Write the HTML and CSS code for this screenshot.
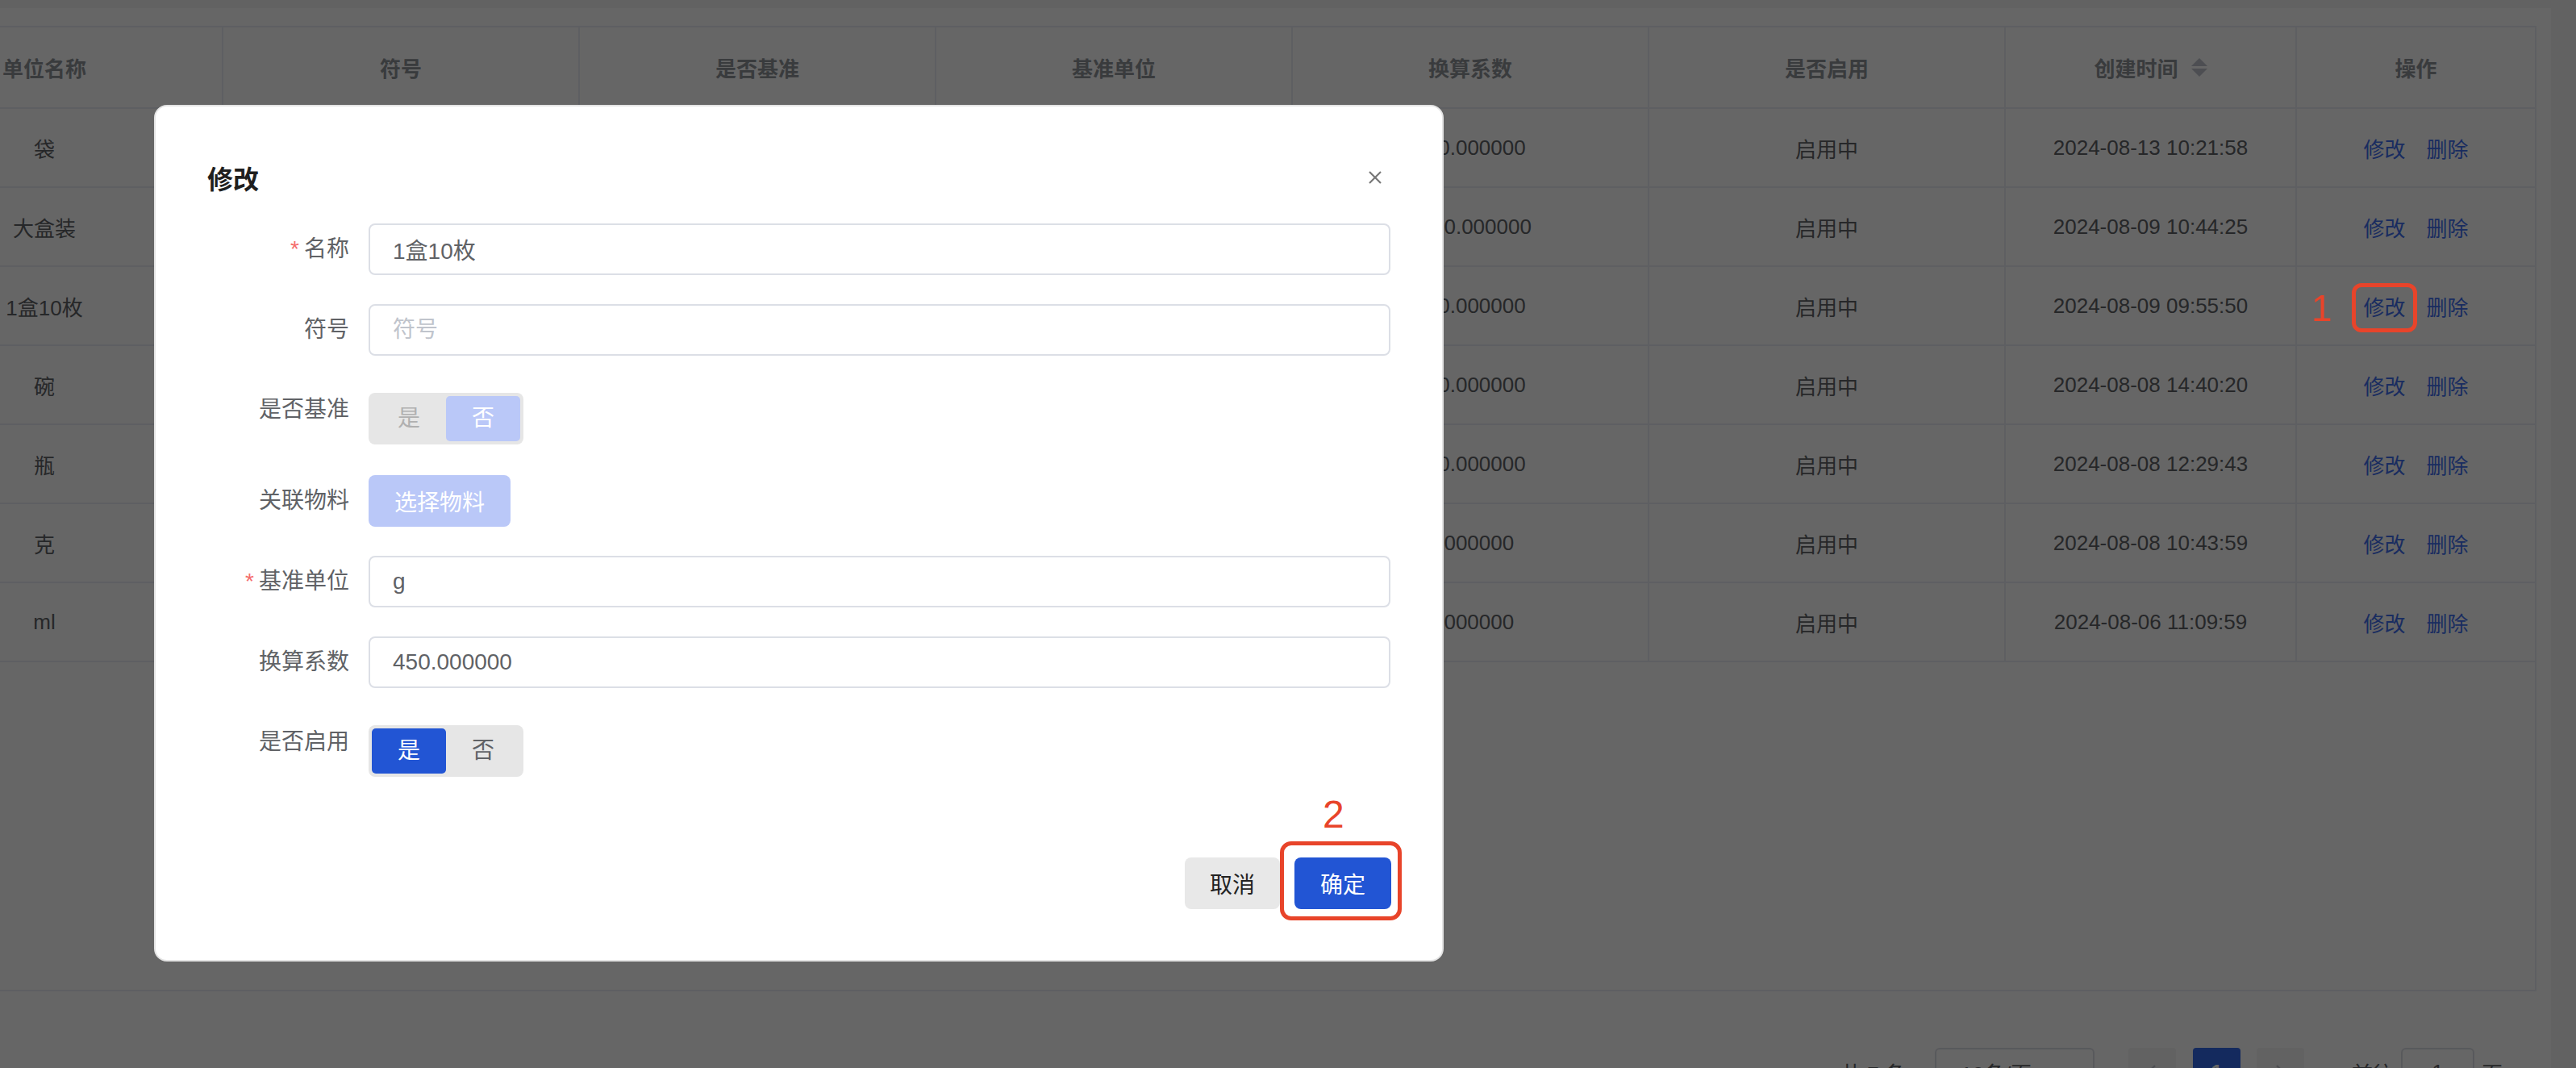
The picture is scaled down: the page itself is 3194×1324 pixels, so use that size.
FILE: index.html
```html
<!DOCTYPE html>
<html lang="zh-CN">
<head>
    <meta charset="UTF-8">
    <meta name="viewport" content="width=device-width, initial-scale=1.0">
    <title>计量单位</title>
    <link rel="stylesheet" href="styles.css">
</head>
<body>
    <div class="page">
        <div class="card">
            <div class="table-wrap">
                <table class="unit-table">
                    <colgroup>
                        <col class="col-wide">
                        <col class="col-wide">
                        <col class="col-wide">
                        <col class="col-wide">
                        <col class="col-wide">
                        <col class="col-wide">
                        <col class="col-time">
                        <col>
                    </colgroup>
                    <thead>
                        <tr>
                            <th>单位名称</th>
                            <th>符号</th>
                            <th>是否基准</th>
                            <th>基准单位</th>
                            <th>换算系数</th>
                            <th>是否启用</th>
                            <th>
                                <span class="sortable">创建时间
                                    <svg class="sort-caret" width="20" height="24" viewBox="0 0 20 24">
                                        <polygon points="10,0 20,10 0,10" />
                                        <polygon points="0,13 20,13 10,23" />
                                    </svg>
                                </span>
                            </th>
                            <th>操作</th>
                        </tr>
                    </thead>
                    <tbody>
                        <tr>
                            <td>袋</td><td></td><td>否</td><td>个</td><td>100.000000</td><td>启用中</td><td>2024-08-13 10:21:58</td>
                            <td><a class="link">修改</a><a class="link">删除</a></td>
                        </tr>
                        <tr>
                            <td>大盒装</td><td></td><td>否</td><td>个</td><td>1000.000000</td><td>启用中</td><td>2024-08-09 10:44:25</td>
                            <td><a class="link">修改</a><a class="link">删除</a></td>
                        </tr>
                        <tr>
                            <td>1盒10枚</td><td></td><td>否</td><td>g</td><td>450.000000</td><td>启用中</td><td>2024-08-09 09:55:50</td>
                            <td><a class="link">修改</a><a class="link">删除</a></td>
                        </tr>
                        <tr>
                            <td>碗</td><td></td><td>否</td><td>ml</td><td>500.000000</td><td>启用中</td><td>2024-08-08 14:40:20</td>
                            <td><a class="link">修改</a><a class="link">删除</a></td>
                        </tr>
                        <tr>
                            <td>瓶</td><td></td><td>否</td><td>ml</td><td>500.000000</td><td>启用中</td><td>2024-08-08 12:29:43</td>
                            <td><a class="link">修改</a><a class="link">删除</a></td>
                        </tr>
                        <tr>
                            <td>克</td><td>g</td><td>是</td><td>g</td><td>1.000000</td><td>启用中</td><td>2024-08-08 10:43:59</td>
                            <td><a class="link">修改</a><a class="link">删除</a></td>
                        </tr>
                        <tr>
                            <td>ml</td><td>ml</td><td>是</td><td>ml</td><td>1.000000</td><td>启用中</td><td>2024-08-06 11:09:59</td>
                            <td><a class="link">修改</a><a class="link">删除</a></td>
                        </tr>
                    </tbody>
                </table>
            </div>

            <div class="pager">
                <span class="pager-total">共 7 条</span>
                <div class="pager-size">
                    <span>10条/页</span>
                    <svg width="18" height="12" viewBox="0 0 18 12"><polyline points="2,2 9,9 16,2" /></svg>
                </div>
                <button class="pager-btn pager-prev">
                    <svg width="12" height="20" viewBox="0 0 12 20"><polyline points="10,2 2,10 10,18" /></svg>
                </button>
                <button class="pager-btn pager-num active">1</button>
                <button class="pager-btn pager-next">
                    <svg width="12" height="20" viewBox="0 0 12 20"><polyline points="2,2 10,10 2,18" /></svg>
                </button>
                <span class="pager-goto">前往</span>
                <input class="pager-input" type="text" value="1">
                <span>页</span>
            </div>
        </div>
    </div>

    <div class="mask"></div>

    <div class="dialog">
        <div class="dialog-header">
            <span class="dialog-title">修改</span>
            <button class="dialog-close" type="button">
                <svg width="16" height="16" viewBox="0 0 16 16">
                    <line x1="1" y1="1" x2="15" y2="15" />
                    <line x1="15" y1="1" x2="1" y2="15" />
                </svg>
            </button>
        </div>

        <form class="dialog-body">
            <div class="form-item">
                <label class="form-label is-required">名称</label>
                <input class="text-input" type="text" value="1盒10枚">
            </div>

            <div class="form-item">
                <label class="form-label">符号</label>
                <input class="text-input" type="text" placeholder="符号">
            </div>

            <div class="form-item is-toggle">
                <label class="form-label">是否基准</label>
                <div class="segmented is-disabled">
                    <span class="seg-item">是</span>
                    <span class="seg-item active">否</span>
                </div>
            </div>

            <div class="form-item">
                <label class="form-label">关联物料</label>
                <button class="pick-btn" type="button">选择物料</button>
            </div>

            <div class="form-item">
                <label class="form-label is-required">基准单位</label>
                <input class="text-input" type="text" value="g">
            </div>

            <div class="form-item">
                <label class="form-label">换算系数</label>
                <input class="text-input" type="text" value="450.000000">
            </div>

            <div class="form-item is-toggle">
                <label class="form-label">是否启用</label>
                <div class="segmented">
                    <span class="seg-item active">是</span>
                    <span class="seg-item">否</span>
                </div>
            </div>
        </form>

        <div class="dialog-footer">
            <button class="btn btn-cancel" type="button">取消</button>
            <button class="btn btn-primary" type="button">确定</button>
        </div>
    </div>

    <!-- step annotations drawn on top of the screenshot -->
    <span class="step-num step-num-1">1</span>
    <div class="step-box step-box-1"></div>
    <span class="step-num step-num-2">2</span>
    <div class="step-box step-box-2"></div>
</body>
</html>
```

FILE: styles.css
```css
html, body {
    margin: 0;
    padding: 0;
    overflow: hidden;
}

body {
    font-family: "Liberation Sans", "Noto Sans CJK SC", sans-serif;
    background: #f5f5f5;
    color: #606266;
    width: 3194px;
    height: 1324px;
}

.page {
    padding-top: 10px;
}

.card {
    background: #fff;
    margin: 0 31px 0 -200px;
    padding: 22px 18px 60px 33px;
}

/* table */
.table-wrap {
    height: 1197px;
    box-sizing: border-box;
    border: 2px solid #ebeef5;
}

.unit-table {
    width: 100%;
    table-layout: fixed;
    border-collapse: separate;
    border-spacing: 0;
    font-size: 26px;
}

.col-wide {
    width: 442px;
}

.col-time {
    width: 361px;
}

.unit-table th,
.unit-table td {
    padding: 0;
    text-align: center;
    white-space: nowrap;
    overflow: hidden;
    border-right: 2px solid #ebeef5;
    border-bottom: 2px solid #ebeef5;
}

.unit-table th:last-child,
.unit-table td:last-child {
    border-right: none;
}

.unit-table th {
    height: 99px;
    color: #909399;
    font-weight: 600;
}

.unit-table td {
    height: 96px;
    color: #606266;
}

.sortable {
    display: inline-flex;
    align-items: center;
}

.sort-caret {
    margin-left: 16px;
    fill: #c0c4cc;
}

.link {
    color: #3f6ff0;
    cursor: pointer;
}

.link + .link {
    margin-left: 26px;
}

/* pagination */
.pager {
    display: flex;
    justify-content: flex-end;
    align-items: center;
    margin-top: 70px;
    padding-right: 42px;
    font-size: 26px;
    color: #606266;
}

.pager-size {
    display: flex;
    align-items: center;
    justify-content: space-between;
    box-sizing: border-box;
    width: 198px;
    height: 60px;
    margin-left: 36px;
    padding: 0 22px 0 30px;
    border: 2px solid #dcdfe6;
    border-radius: 6px;
}

.pager-size svg,
.pager-btn svg {
    fill: none;
    stroke: #c0c4cc;
    stroke-width: 2.4;
}

.pager-btn {
    width: 59px;
    height: 60px;
    border: none;
    border-radius: 4px;
    background: #f4f4f5;
    font-family: inherit;
    font-size: 26px;
    font-weight: 600;
    color: #606266;
    display: flex;
    align-items: center;
    justify-content: center;
    padding: 0;
}

.pager-prev {
    margin-left: 42px;
}

.pager-num {
    margin-left: 21px;
}

.pager-next {
    margin-left: 20px;
}

.pager-btn.active {
    background: #3469eb;
    color: #fff;
}

.pager-goto {
    margin-left: 59px;
}

.pager-input {
    box-sizing: border-box;
    width: 91px;
    height: 60px;
    margin: 0 9px;
    border: 2px solid #dcdfe6;
    border-radius: 6px;
    text-align: center;
    font-family: inherit;
    font-size: 26px;
    color: #606266;
}

/* modal */
.mask {
    position: fixed;
    top: 0;
    left: 0;
    right: 0;
    bottom: 0;
    background: rgba(0, 0, 0, 0.6);
    z-index: 10;
}

.dialog {
    position: absolute;
    left: 191px;
    top: 130px;
    width: 1599px;
    box-sizing: border-box;
    background: #fff;
    border: 2px solid #e4e4e4;
    border-radius: 16px;
    font-size: 28px;
    z-index: 20;
}

.dialog-header {
    display: flex;
    justify-content: space-between;
    align-items: center;
    height: 48px;
    padding: 64px 64px 0 64px;
}

.dialog-title {
    font-size: 32px;
    font-weight: 600;
    color: #1f1f1f;
}

.dialog-close {
    border: none;
    background: none;
    padding: 0;
    margin-right: 11px;
    display: flex;
    stroke: #777;
    stroke-width: 2.2;
}

.dialog-body {
    margin: 0;
    padding: 33px 64px 0 64px;
}

.form-item {
    display: flex;
    align-items: flex-start;
    margin-bottom: 36px;
}

.form-item.is-toggle {
    padding-top: 10px;
    margin-bottom: 38px;
}

.form-item.is-toggle:last-child {
    margin-bottom: 36px;
}

.form-label {
    width: 200px;
    flex-shrink: 0;
    box-sizing: border-box;
    padding-right: 24px;
    text-align: right;
    line-height: 64px;
    color: #606266;
}

.is-toggle .form-label {
    line-height: 42px;
}

.form-label.is-required::before {
    content: "*";
    color: #f56c6c;
    margin-right: 6px;
}

.text-input {
    flex: 1;
    height: 64px;
    box-sizing: border-box;
    padding: 0 28px;
    border: 2px solid #dcdfe6;
    border-radius: 8px;
    font-family: inherit;
    font-size: 28px;
    color: #606266;
    outline: none;
}

.text-input::placeholder {
    color: #c0c4cc;
}

.segmented {
    display: inline-flex;
    padding: 4px;
    background: #e6e6e6;
    border-radius: 8px;
}

.seg-item {
    width: 92px;
    height: 56px;
    line-height: 56px;
    text-align: center;
    border-radius: 5px;
    color: #606266;
}

.seg-item.active {
    background: #2255d4;
    color: #fff;
}

.segmented.is-disabled .seg-item {
    color: #b0b0b0;
}

.segmented.is-disabled .seg-item.active {
    background: #bac8f8;
    color: #fff;
}

.pick-btn {
    height: 64px;
    padding: 0 32px;
    border: none;
    border-radius: 8px;
    background: #bac8f8;
    color: #fff;
    font-family: inherit;
    font-size: 28px;
}

.dialog-footer {
    display: flex;
    justify-content: flex-end;
    gap: 18px;
    padding: 64px 63px 63px 64px;
}

.btn {
    height: 64px;
    border: none;
    border-radius: 8px;
    font-family: inherit;
    font-size: 28px;
    cursor: pointer;
}

.btn-cancel {
    padding: 0 31px;
    background: #e8e8e8;
    color: #222;
}

.btn-primary {
    padding: 0 32px;
    background: #2255d4;
    color: #fff;
}

/* annotations */
.step-num {
    position: absolute;
    z-index: 30;
    font-family: "Liberation Sans", sans-serif;
    line-height: 1;
    color: #e8442a;
}

.step-num-1 {
    left: 2866px;
    top: 359px;
    font-size: 46px;
}

.step-num-2 {
    left: 1640px;
    top: 986px;
    font-size: 48px;
}

.step-box {
    position: absolute;
    z-index: 30;
    box-sizing: border-box;
    border: 5px solid #e8442a;
}

.step-box-1 {
    left: 2916px;
    top: 351px;
    width: 81px;
    height: 61px;
    border-radius: 12px;
}

.step-box-2 {
    left: 1587px;
    top: 1043px;
    width: 151px;
    height: 98px;
    border-radius: 14px;
}
```
